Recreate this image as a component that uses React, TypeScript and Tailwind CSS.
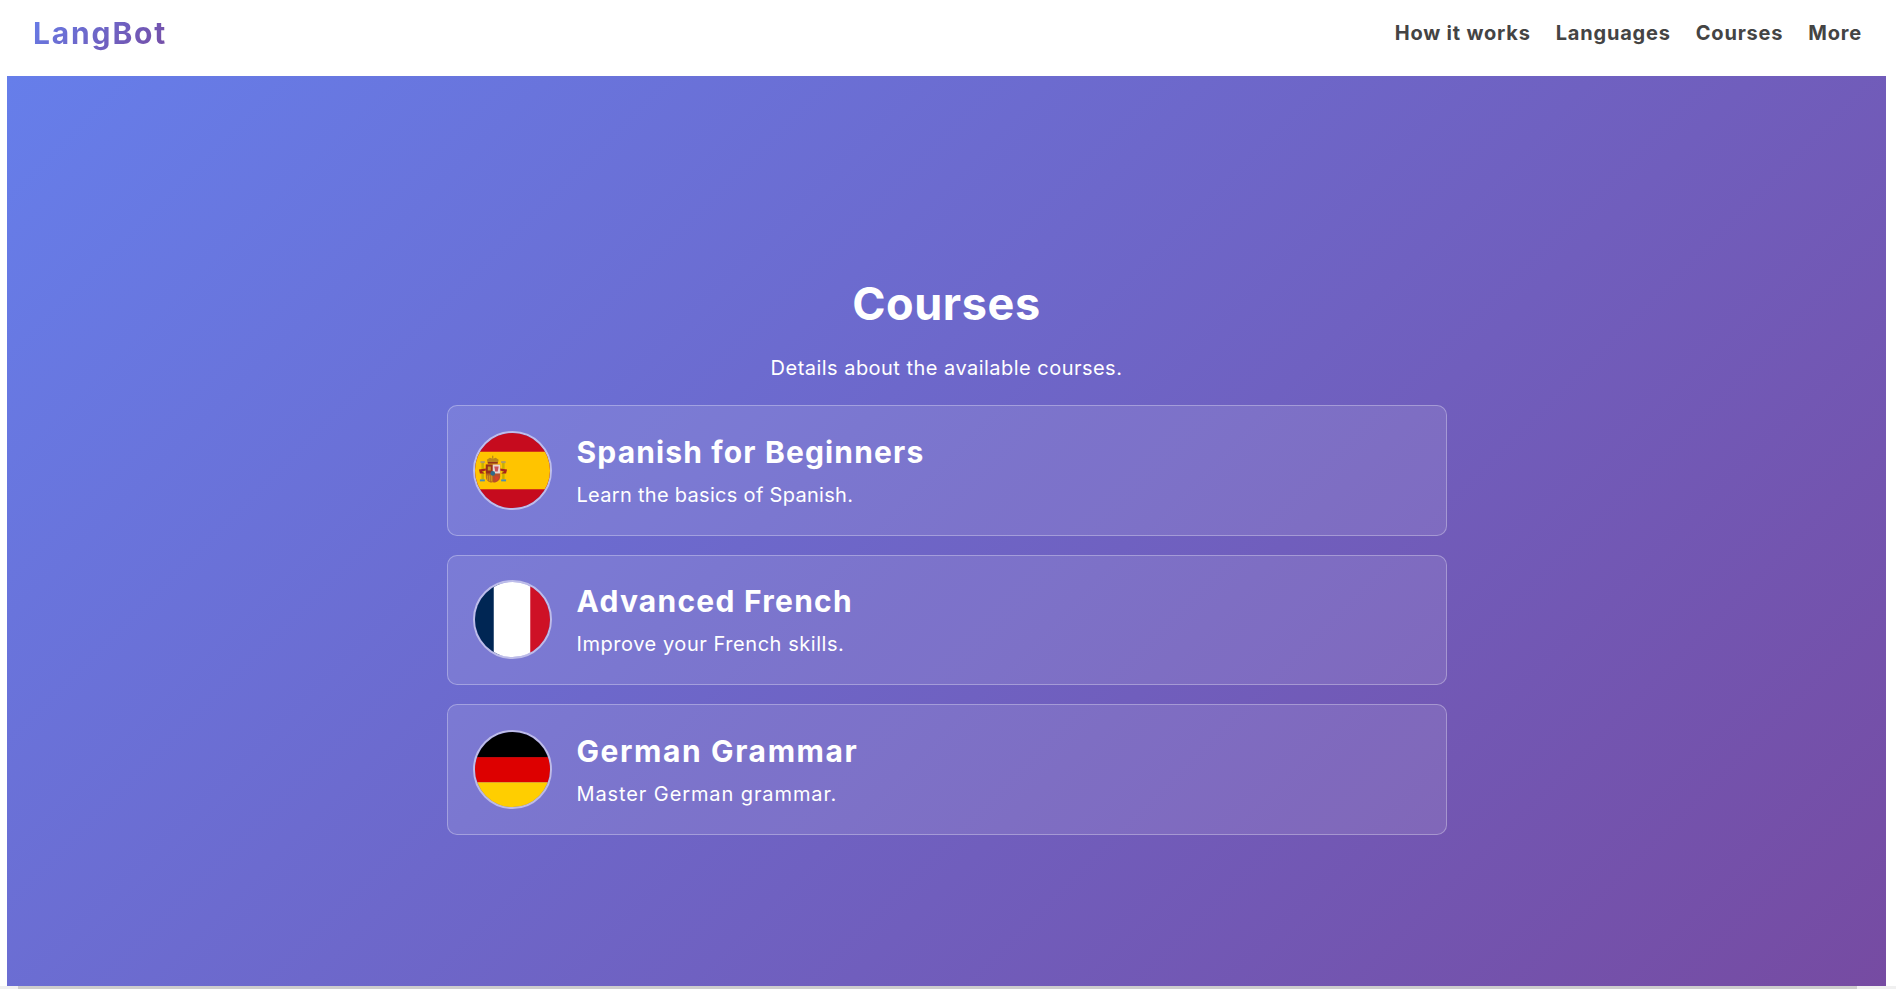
import React from "react";

const SpainFlag = () => (
  <svg viewBox="0 0 76 76" className="w-full h-full block">
    <rect width="76" height="76" fill="#c60b1e" />
    <rect y="19" width="76" height="38" fill="#ffc400" />
    {/* pillars */}
    <rect x="6.5" y="30" width="2.5" height="17" fill="#c8b100" />
    <rect x="27.5" y="30" width="2.5" height="17" fill="#c8b100" />
    <rect x="5.5" y="28.5" width="4.5" height="2" fill="#ad9b6a" />
    <rect x="26.5" y="28.5" width="4.5" height="2" fill="#ad9b6a" />
    <rect x="5" y="47" width="5" height="2" fill="#4d8fb0" />
    <rect x="26.5" y="47" width="5" height="2" fill="#4d8fb0" />
    {/* ribbons */}
    <path d="M4 37 L11 36 L11 38 L7 39 L10 41 L5 41 Z" fill="#a8261a" />
    <path d="M32.5 37 L25.5 36 L25.5 38 L29.5 39 L26.5 41 L31.5 41 Z" fill="#a8261a" />
    {/* crown */}
    <path d="M13 31 L12 27 L15 25 L18 26 L21 25 L24 27 L23 31 Z" fill="#b9851c" />
    <rect x="13" y="29.5" width="10" height="1.5" fill="#8f2c1c" />
    <rect x="17.5" y="23" width="1" height="3" fill="#a87a1a" />
    {/* shield */}
    <path d="M11 32 H18 V50 C14 50.5 11 48 11 44 Z" fill="#b5651d" />
    <path d="M18 32 H25.5 V44 C25.5 48 22 50.5 18 50 Z" fill="#b84f28" />
    <rect x="11" y="32" width="7" height="9" fill="#96301c" />
    <rect x="18" y="32" width="7.5" height="9" fill="#e8d6d0" />
    <path d="M19.5 34 L24 34 L23 39 L20.5 39 Z" fill="#c9505a" />
    <rect x="13" y="34" width="3" height="4" fill="#c89a1e" />
    <circle cx="18" cy="41" r="2.4" fill="#2d6a8a" />
    <path d="M12.5 43 V48 M14.5 43 V49 M16.5 43 V49" stroke="#d7a01b" strokeWidth="1" />
    <path d="M20 44 L24 44 L23.5 47 L21 48.5 Z" fill="#d9412a" />
  </svg>
);

const FranceFlag = () => (
  <svg viewBox="0 0 76 76" className="w-full h-full block">
    <rect width="25" height="76" fill="#002654" />
    <rect x="19" width="38" height="76" fill="#ffffff" />
    <rect x="56" width="20" height="76" fill="#ce1126" />
  </svg>
);

const GermanyFlag = () => (
  <svg viewBox="0 0 76 76" className="w-full h-full block">
    <rect width="76" height="26" fill="#000000" />
    <rect y="25.5" width="76" height="25.5" fill="#dd0000" />
    <rect y="51" width="76" height="25" fill="#ffce00" />
  </svg>
);

const courses = [
  {
    title: "Spanish for Beginners",
    desc: "Learn the basics of Spanish.",
    titleClass: "tracking-[1.15px]",
    descClass: "tracking-[0.3px]",
    flag: <SpainFlag />,
  },
  {
    title: "Advanced French",
    desc: "Improve your French skills.",
    titleClass: "tracking-[1.25px]",
    descClass: "tracking-[0.55px]",
    flag: <FranceFlag />,
  },
  {
    title: "German Grammar",
    desc: "Master German grammar.",
    titleClass: "tracking-[1.6px]",
    descClass: "tracking-[0.9px]",
    flag: <GermanyFlag />,
  },
];

const navLinks = ["How it works", "Languages", "Courses", "More"];

const App: React.FC = () => {
  return (
    <div className="w-full h-screen overflow-hidden flex flex-col bg-white font-['Inter','Liberation_Sans',sans-serif]">
      {/* Header */}
      <header className="h-[76px] shrink-0 flex items-center justify-between pb-[10px] pl-[33px] pr-[34px]">
        <div className="text-[30px] font-bold tracking-[1.85px] bg-[linear-gradient(135deg,#667eea,#764ba2)] bg-clip-text text-transparent">
          LangBot
        </div>
        <nav className="flex gap-[25px]">
          {navLinks.map((link) => (
            <a key={link} className="text-[20px] font-bold text-[#444444] tracking-[0.8px]">
              {link}
            </a>
          ))}
        </nav>
      </header>

      {/* Hero */}
      <main className="ml-[7px] mr-[10px] h-[910px] shrink-0 bg-[linear-gradient(135deg,#667eea,#764ba2)] flex flex-col items-center pt-[199px] text-white">
        <h1 className="text-[45px] leading-[58px] font-bold tracking-[0.6px]">Courses</h1>
        <p className="mt-[20px] text-[20px] leading-[30px] tracking-[0.47px]">Details about the available courses.</p>
        <div className="mt-[22px] w-[1000px] flex flex-col gap-[19px]">
          {courses.map((course) => (
            <div
              key={course.title}
              className="h-[130.5px] flex items-center gap-[25px] pl-[25px] bg-white/10 border border-white/30 rounded-[10px]"
            >
              <div className="w-[79px] h-[79px] shrink-0 rounded-full overflow-hidden border-2 border-white/50">
                {course.flag}
              </div>
              <div>
                <h3 className={`text-[30px] leading-[40px] font-bold ${course.titleClass}`}>{course.title}</h3>
                <p className={`mt-[9px] text-[20px] leading-[28px] ${course.descClass}`}>{course.desc}</p>
              </div>
            </div>
          ))}
        </div>
      </main>

      {/* Scrollbar */}
      <div className="h-[3px] shrink-0 bg-[#f0f0f0] pl-[18px] pr-[39px]">
        <div className="h-full bg-[#cdcdcd]" />
      </div>
    </div>
  );
};

export default App;
